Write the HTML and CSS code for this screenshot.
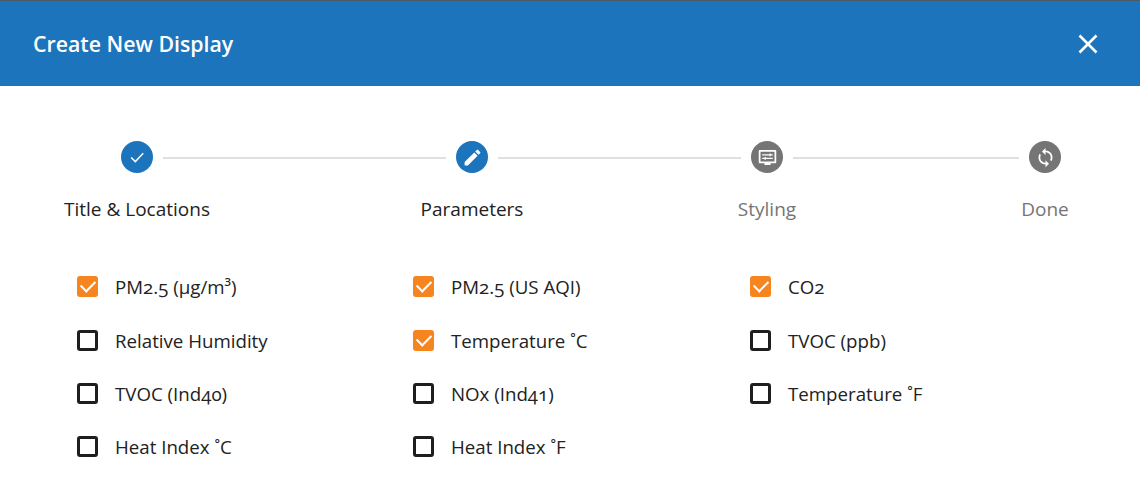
FILE: index.html
```html
<!DOCTYPE html>
<html lang="en">
<head>
    <meta charset="UTF-8">
    <meta name="viewport" content="width=device-width, initial-scale=1.0">
    <title>Create New Display</title>
    <link rel="stylesheet" href="styles.css">
</head>
<body>
    <div class="modal">
        <div class="modal-header">
            <h1>Create New Display</h1>
            <button class="close-btn" aria-label="Close">
                <svg width="20" height="20" viewBox="0 0 20 20"><path d="M1.500 1.500L18.500 18.500M18.500 1.500L1.500 18.500" fill="none" stroke="#fff" stroke-width="2.600"/></svg>
            </button>
        </div>

        <div class="stepper">
            <div class="step-icon active">
                <svg width="20" height="20" viewBox="0 0 24 24"><path d="M5 12.500L10 17.500L19.500 7.500" fill="none" stroke="#fff" stroke-width="1.800"/></svg>
            </div>
            <div class="step-line"></div>
            <div class="step-icon active">
                <svg width="21" height="21" viewBox="0 0 24 24"><path d="M3 17.250V21h3.750L17.810 9.940l-3.750-3.750L3 17.250zM20.710 7.040a1 1 0 0 0 0-1.410l-2.340-2.340a1 1 0 0 0-1.410 0l-1.830 1.830 3.750 3.750 1.830-1.830z" fill="#fff"/></svg>
            </div>
            <div class="step-line"></div>
            <div class="step-icon">
                <svg width="21" height="21" viewBox="0 0 24 24"><path d="M3 3.500h18a1 1 0 0 1 1 1v13a1 1 0 0 1-1 1h-5.500v2h-7v-2H3a1 1 0 0 1-1-1v-13a1 1 0 0 1 1-1zM4 5.500v11h16v-11z" fill="#fff"/><path d="M6 9h12M6 13h12M15 7.500V10.500M9.500 11.500v3" fill="none" stroke="#fff" stroke-width="1.500"/></svg>
            </div>
            <div class="step-line"></div>
            <div class="step-icon">
                <svg width="21" height="21" viewBox="0 0 24 24"><path d="M12 4V1L8 5l4 4V6c3.310 0 6 2.690 6 6 0 1.010-.250 1.970-.700 2.800l1.460 1.460A7.930 7.930 0 0 0 20 12c0-4.420-3.580-8-8-8zm0 14c-3.310 0-6-2.690-6-6 0-1.010.250-1.970.700-2.800L5.240 7.740A7.930 7.930 0 0 0 4 12c0 4.420 3.580 8 8 8v3l4-4-4-4v3z" fill="#fff"/></svg>
            </div>

            <div class="step-label col-1">Title &amp; Locations</div>
            <div class="step-label col-2">Parameters</div>
            <div class="step-label col-3 muted">Styling</div>
            <div class="step-label col-4 muted">Done</div>
        </div>

        <div class="params">
            <div class="param-col">
                <label class="param"><span class="box checked"></span>PM2.5 (µg/m³)</label>
                <label class="param"><span class="box"></span>Relative Humidity</label>
                <label class="param"><span class="box"></span>TVOC (Ind40)</label>
                <label class="param"><span class="box"></span>Heat Index ˚C</label>
            </div>
            <div class="param-col">
                <label class="param"><span class="box checked"></span>PM2.5 (US AQI)</label>
                <label class="param"><span class="box checked"></span>Temperature ˚C</label>
                <label class="param"><span class="box"></span>NOx (Ind41)</label>
                <label class="param"><span class="box"></span>Heat Index ˚F</label>
            </div>
            <div class="param-col">
                <label class="param"><span class="box checked"></span>CO2</label>
                <label class="param"><span class="box"></span>TVOC (ppb)</label>
                <label class="param"><span class="box"></span>Temperature ˚F</label>
            </div>
        </div>
    </div>
</body>
</html>
```

FILE: styles.css
```css
* {
    box-sizing: border-box;
}

body {
    margin: 0;
    background: white;
    font-family: 'Open Sans', 'Noto Sans', sans-serif;
    font-variant-numeric: oldstyle-nums;
    color: #222;
    overflow: hidden;
}

.modal-header {
    height: 86px;
    display: flex;
    align-items: center;
    justify-content: space-between;
    padding: 0 42px 0 33px;
    background: #1c75bc;
    border-top: 1px solid #4a5a66;
}

.modal-header h1 {
    margin: 0;
    color: white;
    font-size: 21.300px;
    font-weight: 600;
}

.close-btn {
    display: flex;
    padding: 0;
    background: none;
    border: none;
    cursor: pointer;
}

.stepper {
    display: grid;
    grid-template-columns: 32px 303px 32px 263px 32px 246px 32px;
    grid-template-rows: 32px auto;
    row-gap: 23px;
    align-items: center;
    margin-top: 55px;
    padding-left: 121px;
}

.step-icon {
    width: 32px;
    height: 32px;
    display: flex;
    align-items: center;
    justify-content: center;
    border-radius: 50%;
    background: #757575;
}

.step-icon.active {
    background: #1c75bc;
}

.step-line {
    height: 2px;
    margin: 1px 10px 0;
    background: #e0e0e0;
}

.step-label {
    grid-row: 2;
    justify-self: center;
    white-space: nowrap;
    font-size: 19px;
    line-height: 26px;
}

.col-1 { grid-column: 1; }
.col-2 { grid-column: 3; }
.col-3 { grid-column: 5; }
.col-4 { grid-column: 7; }

.muted {
    color: #757575;
}

.params {
    display: grid;
    grid-template-columns: 336px 337px 1fr;
    margin-top: 38px;
    padding-left: 77px;
}

.param {
    display: flex;
    align-items: center;
    height: 53.400px;
    font-size: 18.700px;
    cursor: pointer;
}

.box {
    position: relative;
    width: 21px;
    height: 21px;
    margin-right: 17px;
    border: 3px solid #1e1e1e;
    border-radius: 3px;
}

.box.checked {
    background: #f6841f;
    border-color: #f6841f;
}

.box.checked::after {
    content: "";
    position: absolute;
    left: 1px;
    top: 1px;
    width: 12px;
    height: 7px;
    border-left: 2px solid white;
    border-bottom: 2px solid white;
    transform: rotate(-45deg);
}
```
